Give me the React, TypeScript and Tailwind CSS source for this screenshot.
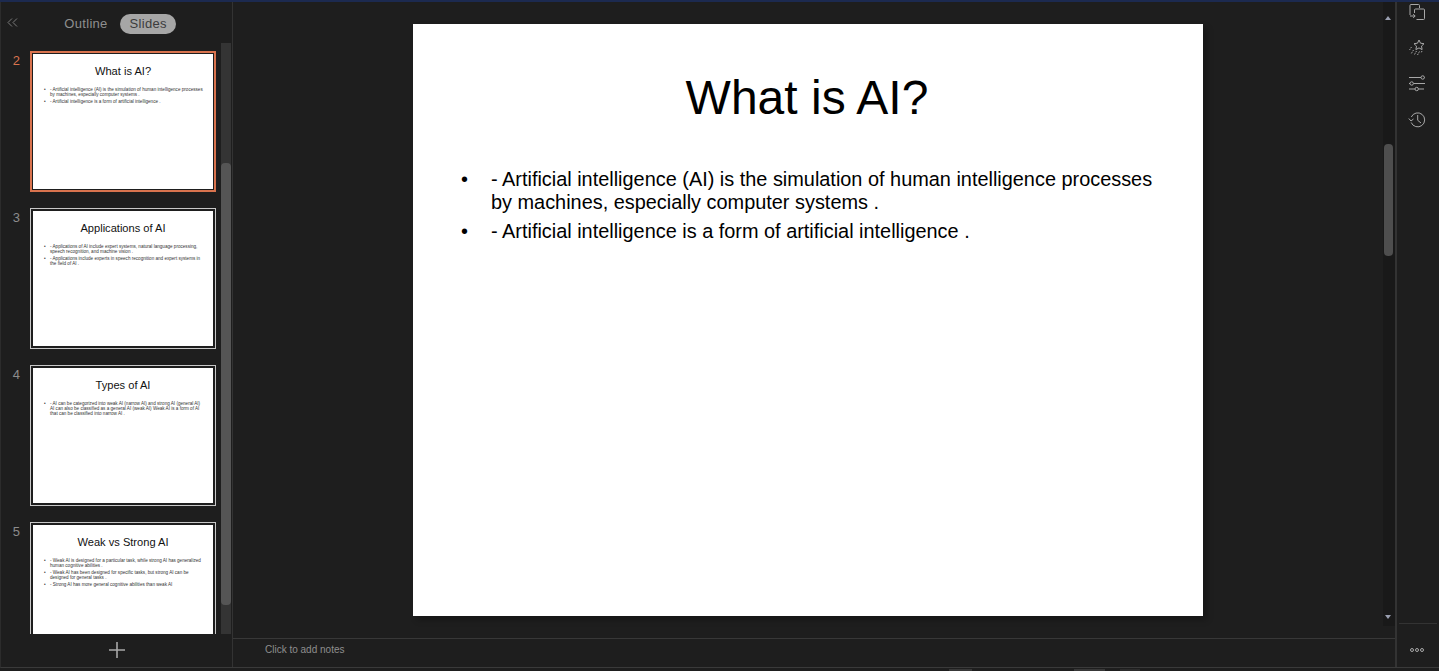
import React from 'react';

const slides = [
  {
    n: 2,
    title: 'What is AI?',
    lines: [
      '- Artificial intelligence (AI) is the simulation of human intelligence processes\nby machines, especially computer systems .',
      '- Artificial intelligence is a form of artificial intelligence .',
    ],
  },
  {
    n: 3,
    title: 'Applications of AI',
    lines: [
      '- Applications of AI include expert systems, natural language processing,\nspeech recognition, and machine vision .',
      '- Applications include experts in speech recognition and expert systems in\nthe field of AI .',
    ],
  },
  {
    n: 4,
    title: 'Types of AI',
    lines: [
      '- AI can be categorized into weak AI (narrow AI) and strong AI (general AI)\nAI can also be classified as a general AI (weak AI) Weak AI is a form of AI\nthat can be classified into narrow AI .',
    ],
  },
  {
    n: 5,
    title: 'Weak vs Strong AI',
    lines: [
      '- Weak AI is designed for a particular task, while strong AI has generalized\nhuman cognitive abilities .',
      '- Weak AI has been designed for specific tasks, but strong AI can be\ndesigned for general tasks .',
      '- Strong AI has more general cognitive abilities than weak AI',
    ],
  },
];

const Thumb = ({ slide, active }: { slide: (typeof slides)[number]; active: boolean }) => {
  return (
    <div className="flex shrink-0 h-[141px]">
      <div className={`w-[29px] pr-[10px] pt-[2px] text-right text-[13px] leading-[16px] ${active ? 'text-[#d9734e]' : 'text-[#8c8c8c]'}`}>
        {slide.n}
      </div>
      <div className={`w-[186px] h-[141px] shrink-0 ${active ? 'border-2 border-[#d9734e] p-[1px]' : 'border border-[#c8c8c8] p-[2px]'}`}>
        <div className="bg-white w-full h-full flex flex-col text-[#111111] overflow-hidden">
          <div className="text-center text-[11.1px] leading-[14px] pt-[10px]">{slide.title}</div>
          <div className="mt-[9px] pl-[11px] flex flex-col gap-[1.8px] text-[#333333]">
            {slide.lines.map((line) => (
              <div key={line} className="flex text-[4.6px] leading-[5.2px]">
                <span className="w-[6px] shrink-0">•</span>
                <span className="whitespace-pre">{line}</span>
              </div>
            ))}
          </div>
        </div>
      </div>
    </div>
  );
};

const RailIcon = ({ children }: { children: React.ReactNode }) => (
  <svg width="18" height="18" viewBox="0 0 18 18" fill="none" stroke="#a8a8a8" strokeWidth="1">
    {children}
  </svg>
);

const App = () => {
  const main = slides[0];
  return (
    <div className="w-[1439px] h-[671px] overflow-hidden flex flex-col bg-[#1e1e1e] font-['Liberation_Sans',Arial,sans-serif]">
      <div className="h-[2px] shrink-0 bg-[#1c2a50]" />
      <div className="flex flex-1 min-h-0 border-b border-[#3a3a3a] border-l-[1px] border-l-[#2c2c2c]">
        {/* left panel */}
        <div className="w-[232px] shrink-0 flex flex-col border-r border-[#333333]">
          <div className="h-[41px] shrink-0 relative flex items-center justify-center pl-[7px] pt-[3px] gap-[12px]">
            <svg className="absolute left-[6px] top-[16px]" width="11" height="9" viewBox="0 0 11 9" fill="none" stroke="#7a7a7a" strokeWidth="1">
              <path d="M5 0.5 L1 4.5 L5 8.5" />
              <path d="M10 0.5 L6 4.5 L10 8.5" />
            </svg>
            <span className="text-[13px] text-[#8f8f8f] tracking-[0.3px]">Outline</span>
            <span className="h-[20px] w-[56px] pl-[1px] rounded-full bg-[#a6a6a6] text-[#3c3c3c] text-[13px] tracking-[0.3px] flex items-center justify-center">Slides</span>
          </div>
          <div className="flex flex-1 min-h-0">
            <div className="flex-1 min-w-0 pt-[8px] flex flex-col gap-[16px] overflow-hidden h-[591px]">
              {slides.map((s, i) => (
                <Thumb key={s.n} slide={s} active={i === 0} />
              ))}
            </div>
            <div className="w-[10px] mr-[1px] h-[591px] bg-[#343434] pt-[120px] shrink-0">
              <div className="h-[442px] bg-[#555555] rounded-[4px]" />
            </div>
          </div>
          <div className="h-[33px] shrink-0 flex items-center justify-center pb-[2px]">
            <svg width="16" height="16" viewBox="0 0 16 16" stroke="#a8a8a8" strokeWidth="1.6">
              <path d="M8 0 V16 M0 8 H16" />
            </svg>
          </div>
        </div>

        {/* main stage */}
        <div className="flex-1 min-w-0 flex flex-col">
          <div className="flex flex-1 min-h-0 border-b border-[#383838] h-[636px]">
            <div className="flex-1 min-w-0 flex justify-center pt-[22px]">
              <div className="w-[790px] h-[592px] bg-white text-black shadow-[4px_4px_6px_rgba(0,0,0,0.25)]">
                <h1 className="text-center text-[48px] leading-[60px] pt-[44px] pr-[2px]">{main.title}</h1>
                <div className="mt-[40px] pl-[48px] pr-[40px] flex flex-col gap-[6px]">
                  {main.lines.map((line) => (
                    <div key={line} className="flex text-[19.9px] leading-[23px]">
                      <span className="w-[30px] shrink-0">•</span>
                      <span>{line}</span>
                    </div>
                  ))}
                </div>
              </div>
            </div>
            <div className="w-[12px] shrink-0 h-[624px] bg-[#191919] relative">
              <div className="absolute left-[1px] top-[142px] w-[9px] h-[112px] rounded-[4px] bg-[#4e4e4e]" />
              <div className="absolute left-[2px] top-[14px] w-0 h-0 border-x-[3.5px] border-x-transparent border-b-[4px] border-b-[#9a9fb0]" />
              <div className="absolute left-[2px] top-[613px] w-0 h-0 border-x-[3.5px] border-x-transparent border-t-[4px] border-t-[#9a9fb0]" />
            </div>
          </div>
          <div className="h-[28px] shrink-0 pl-[32px] flex items-center text-[10px] text-[#8e8e8e] pb-[8px]">Click to add notes</div>
        </div>

        {/* right rail */}
        <div className="w-[44px] shrink-0 border-l-2 border-[#333333] flex flex-col items-center">
          <div className="flex flex-col items-center gap-[18px] mt-[1px] mr-[2px]">
            <RailIcon>
              <path d="M11.5 5 V2.5 A1 1 0 0 0 10.5 1.5 H3 A1 1 0 0 0 2 2.5 V12" />
              <path d="M6.5 10 V7 A1 1 0 0 1 7.5 6 H15.5 A1 1 0 0 1 16.5 7 V15.5 A1 1 0 0 1 15.5 16.5 H8.5" />
              <path d="M2 13 H7 M5.2 11.2 L7.2 13 L5.2 14.8" />
            </RailIcon>
            <RailIcon>
              <path d="M11 1 L12.5 4.2 L16 4.7 L13.5 7.1 L14.1 10.6 L11 8.9 L7.9 10.6 L8.5 7.1 L6 4.7 L9.5 4.2 Z" />
              <path d="M3.5 8 L1.5 11 M5.5 11 L3 15 M8.5 12 L6.5 15.5 M11.5 12.5 L9.5 16 M14 12 L13 14" strokeDasharray="1.5 1" />
            </RailIcon>
            <RailIcon>
              <path d="M1 2.5 H13 M16.5 2.5 H17 M1 8.5 H2 M5.5 8.5 H17 M1 14 H7 M10.5 14 H16" />
              <circle cx="14.7" cy="2.5" r="1.7" />
              <circle cx="3.7" cy="8.5" r="1.7" />
              <circle cx="8.7" cy="14" r="1.7" />
            </RailIcon>
            <RailIcon>
              <path d="M3.3 6 A7 7 0 1 1 3.2 11.5" />
              <path d="M0.8 7.5 L3 10 L5.5 8" />
              <path d="M9.7 4 V9.3 L13 12" />
            </RailIcon>
          </div>
          <div className="mt-auto w-full flex flex-col">
            <div className="mx-[2px] border-t border-[#333333] h-[44px] flex items-start justify-center gap-[1.5px] pt-[24px] pr-[2px]">
              <span className="w-[3.5px] h-[3.5px] rounded-full border border-[#a8a8a8]" />
              <span className="w-[3.5px] h-[3.5px] rounded-full border border-[#a8a8a8]" />
              <span className="w-[3.5px] h-[3.5px] rounded-full border border-[#a8a8a8]" />
            </div>
          </div>
        </div>
      </div>
      <div className="h-[3px] shrink-0 pt-[1px] flex items-start pl-[949px] gap-[15px]">
        <div className="w-[23px] h-[2px] bg-[#383838] mr-[87px]" />
        <div className="w-[31px] h-[2px] bg-[#383838]" />
        <div className="w-[20px] h-[2px] bg-[#2c2c2c]" />
      </div>
    </div>
  );
};

export default App;
